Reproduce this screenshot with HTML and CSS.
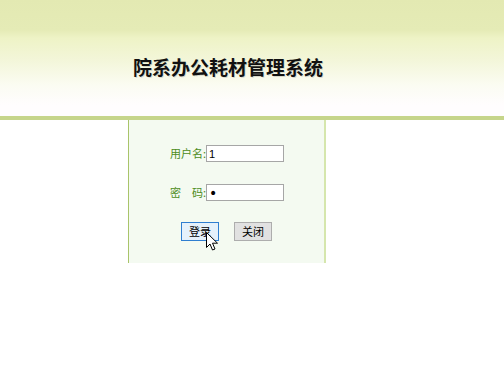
FILE: index.html
```html
<!DOCTYPE html>
<html>
<head>
<meta charset="utf-8">
<link rel="stylesheet" href="styles.css">
</head>
<body>
<div class="header"><h1 class="title">院系办公耗材管理系统</h1></div>
<div class="bar"></div>
<div class="panel">
  <div class="row"><span class="label">用户名:</span><input class="field" type="text" value="1"></div>
  <div class="row row2"><span class="label">密　码:</span><input class="field field-pass" type="password" value="1"></div>
  <div class="buttons">
    <button class="btn btn-login">登录</button>
    <button class="btn">关闭</button>
  </div>
  <svg class="cursor" width="13" height="20" viewBox="0 0 13 20"><path d="M0.5 0.5 L0.5 15.5 L4 12 L6.5 18 L9 17 L6.5 11.2 L11.5 11.2 Z" fill="#fff" stroke="#000" stroke-width="1" stroke-linejoin="round"/></svg>
</div>
</body>
</html>
```
FILE: styles.css
```css
html, body { margin: 0; padding: 0; background: #fff; }
body { font-family: "Noto Sans CJK SC", "Liberation Sans", sans-serif; }
.header {
  height: 116px;
  background: linear-gradient(#e3e9b2 0px, #e5ebb6 30px, #eef3c6 38px, #f3f6d9 60px, #fbfcf2 85px, #fffdfe 105px);
  display: flex;
  align-items: flex-start;
}
.title {
  margin: 55px 0 0 133px;
  font-size: 19px;
  line-height: 24px;
  font-weight: bold;
  color: #111;
  text-shadow: 1px 1px 0 rgba(0,0,0,0.12);
}
.bar { height: 4px; background: #c6d58b; }
.panel {
  position: relative;
  margin-left: 128px;
  width: 198px;
  height: 143px;
  box-sizing: border-box;
  padding-top: 25px;
  background: #f4faf1;
  border-left: 1px solid #a9c46a;
  border-right: 2px solid #d5e6ad;
}
.row { display: flex; align-items: center; padding-left: 41px; height: 17px; }
.row2 { margin-top: 22px; }
.label {
  flex: 0 0 36px;
  white-space: nowrap;
  font-size: 11px;
  color: #4c8c22;
  line-height: 17px;
}
.field {
  flex: 0 0 78px;
  margin: 0;
  width: 78px; height: 17px;
  box-sizing: border-box;
  border: 1px solid #a6a6a6;
  padding: 0 2px;
  font-size: 11px;
  font-family: "Liberation Sans", sans-serif;
  background: #fff;
  color: #000;
}
.field-pass { font-size: 14px; font-family: "DejaVu Sans", sans-serif; }
.buttons { display: flex; gap: 15px; padding-left: 52px; margin-top: 21px; }
.btn {
  width: 38px; height: 19px;
  padding: 0;
  font-size: 11px;
  font-family: "Noto Sans CJK SC", sans-serif;
  background: #e1e1e1;
  border: 1px solid #adadad;
  color: #000;
  line-height: 17px;
}
.btn-login { background: #e5f1fb; border-color: #2f7ed0; }
.cursor { position: absolute; left: 77px; top: 112px; }
```
